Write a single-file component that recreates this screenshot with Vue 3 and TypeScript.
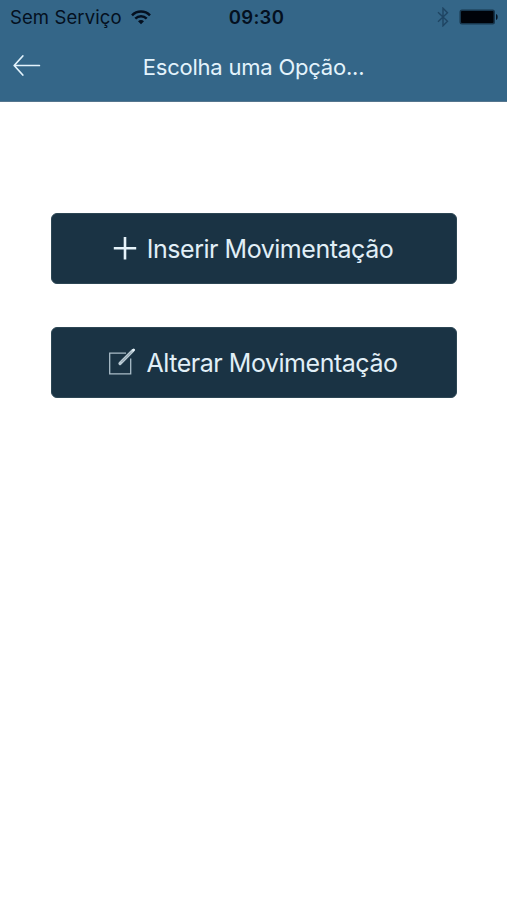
<script setup lang="ts">
type IconName = 'plus' | 'edit'

interface Option {
  id: string
  label: string
  icon: IconName
}

const options: Option[] = [
  { id: 'insert', label: 'Inserir Movimentação', icon: 'plus' },
  { id: 'alter', label: 'Alterar Movimentação', icon: 'edit' },
]
</script>

<template>
  <div class="screen">
    <header class="header">
      <div class="status">
        <div class="status-left">
          <span class="carrier">Sem Serviço</span>
          <svg class="wifi" width="20" height="15" viewBox="0 0 20 15" fill="none" stroke="#041020" stroke-width="2.5">
            <path d="M1 5.3C6 .2 14 .2 19 5.3" />
            <path d="M4.3 8.7c3.2-3.2 8.2-3.2 11.4 0" />
            <path d="M7 11.2c1.7-1.5 4.3-1.5 6 0L10 14.2z" fill="#041020" stroke="none" />
          </svg>
        </div>
        <span class="time">09:30</span>
        <div class="status-right">
          <svg class="bluetooth" width="12" height="20" viewBox="0 0 12 20" fill="none" stroke="#1f4563" stroke-width="1.4">
            <path d="M1 5.2l9.5 9L6 18.8V1.2l4.5 4.6-9.5 9" />
          </svg>
          <svg class="battery" width="39" height="16" viewBox="0 0 39 16">
            <rect x=".5" y=".5" width="35.5" height="15" rx="2.5" fill="#17364d" />
            <rect x="2" y="2" width="32.5" height="12" rx="1" fill="#000309" />
            <path d="M37 5c2.2.5 2.2 5.5 0 6z" fill="#071523" />
          </svg>
        </div>
      </div>
      <nav class="nav">
        <button class="back" type="button" aria-label="Voltar">
          <svg width="28" height="22" viewBox="0 0 28 22" fill="none" stroke="#e3f3fc" stroke-width="1.7" stroke-linecap="round" stroke-linejoin="round">
            <path d="M26.4 10.5H1.2M9.8 1L1.2 10.5l8.6 9.5" />
          </svg>
        </button>
        <h1 class="title">Escolha uma Opção...</h1>
      </nav>
    </header>
    <main class="options">
      <button v-for="option in options" :key="option.id" class="option" :class="option.id" type="button">
        <svg v-if="option.icon === 'plus'" class="icon" width="24" height="26" viewBox="0 0 24 26" fill="none" stroke="#e6f3fa" stroke-width="2.6">
          <path d="M12 1v22.4M.8 12.2h22.4" />
        </svg>
        <svg v-else class="icon" width="28" height="30" viewBox="0 0 28 30" fill="none">
          <path d="M18 5.2H1.7v20.6h21V10.5" stroke="#aabdc8" stroke-width="1.3" />
          <path d="M12 15.5L24.8 2.7" stroke="#b9cad4" stroke-width="3.2" stroke-linecap="round" />
          <path d="M13.5 14L23 4.5" stroke="#8799a5" stroke-width="1" />
          <path d="M25.500 2l.2-.2" stroke="#e6f3fa" stroke-width="2.600" stroke-linecap="round" />
        </svg>
        <span class="label">{{ option.label }}</span>
      </button>
    </main>
  </div>
</template>

<style>
body {
  background: #fff;
}
</style>

<style scoped>
.screen {
  width: 507px;
  height: 900px;
  overflow: hidden;
  background: #fff;
  font-family: Inter, "Liberation Sans", sans-serif;
}

.header {
  box-sizing: border-box;
  height: 102px;
  background: #346688;
  border-bottom: 1px solid #55768e;
}

.status {
  display: grid;
  grid-template-columns: 1fr auto 1fr;
  align-items: center;
  height: 34px;
  padding: 0 9px 0 10px;
  color: #041020;
  line-height: 24px;
}

.status-left,
.status-right {
  display: flex;
  align-items: center;
}

.status-left {
  gap: 9px;
}

.status-right {
  justify-content: flex-end;
  gap: 10px;
}

.carrier {
  font-size: 18.5px;
  letter-spacing: 0.1px;
}

.time {
  padding-left: 5px;
  font-size: 18.5px;
  font-weight: 600;
  letter-spacing: 0.3px;
}

.nav {
  display: grid;
  grid-template-columns: 60px 1fr 60px;
  align-items: center;
  height: 64px;
}

.back {
  display: flex;
  padding: 0 0 0 13px;
  border: 0;
  background: none;
}

.title {
  margin: 0;
  padding-top: 1px;
  color: #e3f3fc;
  font-size: 22px;
  font-weight: 400;
  letter-spacing: -0.22px;
  line-height: 30px;
  text-align: center;
  white-space: nowrap;
}

.options {
  display: flex;
  flex-direction: column;
  gap: 43px;
  padding: 111px 50px 0 51px;
}

.option {
  display: flex;
  align-items: center;
  justify-content: center;
  box-sizing: border-box;
  height: 71px;
  padding: 0 2px 0 0;
  border: 1px solid #2c4654;
  border-radius: 6px;
  background: #1a3344;
  color: #e1eff7;
  font: inherit;
  font-size: 25px;
  letter-spacing: -0.47px;
  line-height: 34px;
}

.icon {
  flex: none;
  margin-right: 10px;
}

.label {
  white-space: nowrap;
}
</style>
